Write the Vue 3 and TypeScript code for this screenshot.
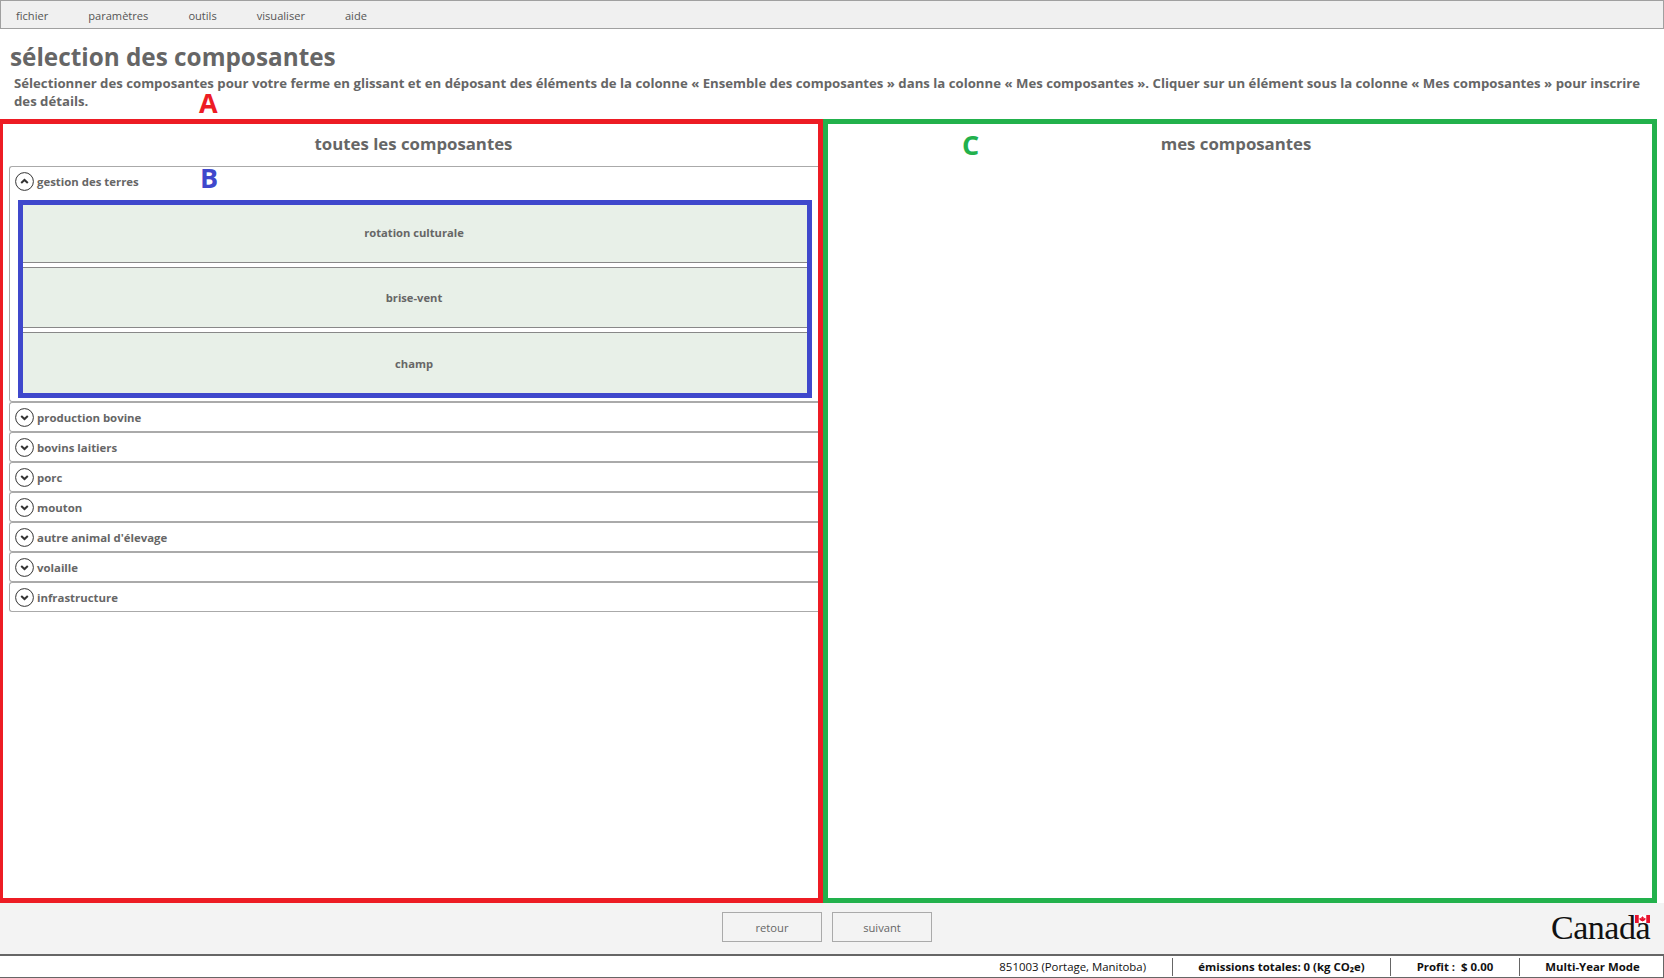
<script setup lang="ts">
const menus: string[] = ['fichier', 'paramètres', 'outils', 'visualiser', 'aide']
const available: string[] = ['rotation culturale', 'brise-vent', 'champ']
const groups: string[] = [
  'production bovine',
  'bovins laitiers',
  'porc',
  'mouton',
  "autre animal d'élevage",
  'volaille',
  'infrastructure',
]
</script>

<template>
  <div class="page">
    <nav class="menu">
      <span v-for="m in menus" :key="m" class="menu-item">{{ m }}</span>
    </nav>

    <header class="head">
      <h1>sélection des composantes</h1>
      <p>
        Sélectionner des composantes pour votre ferme en glissant et en déposant des éléments de la
        colonne « Ensemble des composantes » dans la colonne « Mes composantes ». Cliquer sur un
        élément sous la colonne « Mes composantes » pour inscrire des détails.
      </p>
      <span class="mark mark-a">A</span>
    </header>

    <main class="columns">
      <section class="col col-all">
        <h2>toutes les composantes</h2>
        <div class="expander open">
          <div class="exp-head">
            <svg class="chev" viewBox="0 0 19 19">
              <circle cx="9.500" cy="9.500" r="8.900" fill="none" stroke="#333" stroke-width="1" />
              <path d="M6.200 11 9.500 7.900l3.300 3.100" fill="none" stroke="#333" stroke-width="2" />
            </svg>
            <span>gestion des terres</span>
            <span class="mark mark-b">B</span>
          </div>
          <div class="items">
            <div v-for="a in available" :key="a" class="item">{{ a }}</div>
          </div>
        </div>
        <div v-for="g in groups" :key="g" class="expander">
          <div class="exp-head">
            <svg class="chev" viewBox="0 0 19 19">
              <circle cx="9.500" cy="9.500" r="8.900" fill="none" stroke="#333" stroke-width="1" />
              <path d="M6.200 8 9.500 11.100l3.300-3.100" fill="none" stroke="#333" stroke-width="2" />
            </svg>
            <span>{{ g }}</span>
          </div>
        </div>
      </section>
      <section class="col col-mine">
        <h2>mes composantes</h2>
        <span class="mark mark-c">C</span>
      </section>
    </main>

    <footer class="nav-bar">
      <div class="buttons">
        <button type="button">retour</button>
        <button type="button">suivant</button>
      </div>
      <div class="wordmark">
        Canada
        <svg class="flag" viewBox="0 0 30 16">
          <rect width="30" height="16" fill="#fff" />
          <rect width="7.500" height="16" fill="#e8112d" />
          <rect x="22.500" width="7.500" height="16" fill="#e8112d" />
          <path
            d="M15 2l-1.400 2.600-1.300-.7.600 3.400-1.900-2-.4 1-2-.3.700 2-.9.500 3.200 2.600-.4 1.100 3.400-.4V14h.8v-2.200l3.400.4-.4-1.100 3.200-2.600-.9-.5.700-2-2 .3-.4-1-1.900 2 .6-3.400-1.300.7z"
            fill="#e8112d"
          />
        </svg>
      </div>
    </footer>

    <div class="status">
      <span class="cell plain">851003 (Portage, Manitoba)</span>
      <span class="cell em">émissions totales: 0 (kg CO₂e)</span>
      <span class="cell profit">Profit :&nbsp; $ 0.00</span>
      <span class="cell mode">Multi-Year Mode</span>
    </div>
  </div>
</template>

<style scoped>
.page {
  position: relative;
  display: flex;
  flex-direction: column;
  height: 978px;
  background: #fff;
  color: #666;
  font-family: 'Open Sans', 'Noto Sans', sans-serif;
  overflow: hidden;
}

.menu {
  display: flex;
  align-items: center;
  gap: 40px;
  height: 29px;
  box-sizing: border-box;
  padding: 1px 15px 0;
  background: #f0f0f0;
  border: 1px solid #a0a0a0;
  font-size: 11.100px;
  color: #555;
}

.head {
  position: relative;
  height: 90px;
  box-sizing: border-box;
  padding: 12px 10px 0;
}

h1 {
  margin: 0;
  font-size: 24.300px;
  line-height: 32px;
  font-weight: 700;
  color: #666;
}

.head p {
  margin: 1px 4px 0;
  max-width: 1632px;
  font-size: 13.200px;
  line-height: 18px;
  font-weight: 700;
  color: #666;
}

.columns {
  display: flex;
  height: 784px;
  padding-right: 7px;
}

.col {
  position: relative;
  box-sizing: border-box;
  height: 100%;
  border-style: solid;
  border-width: 5px;
}

.col-all {
  width: 823px;
  border-color: #ed1c24;
  border-left-width: 3px;
  padding-left: 6px;
}

.col-mine {
  flex: 1;
  border-color: #22b14c;
  padding-right: 8px;
}

h2 {
  margin: 0;
  height: 42px;
  line-height: 40px;
  text-align: center;
  font-size: 16.800px;
  font-weight: 700;
  color: #666;
}

.expander {
  box-sizing: border-box;
  height: 30px;
  border: 1px solid #aaa;
  border-right: none;
  border-radius: 3px 0 0 3px;
  padding-left: 5px;
}

.expander.open {
  height: 236px;
}

.exp-head {
  position: relative;
  display: flex;
  align-items: center;
  gap: 3px;
  height: 28px;
  font-size: 11.400px;
  font-weight: 700;
}

.chev {
  width: 19px;
  height: 19px;
  flex: none;
}

.items {
  box-sizing: border-box;
  height: 198px;
  margin: 5px 6px 0 3px;
  border: 5px solid #3f48cc;
  display: flex;
  flex-direction: column;
  gap: 4px;
  background: #fff;
}

.item {
  flex: 1;
  display: flex;
  align-items: center;
  justify-content: center;
  background: #e8f0e8;
  border-top: 1px solid #888;
  border-bottom: 1px solid #888;
  padding-right: 2px;
  font-size: 11.200px;
  font-weight: 700;
}

.item:first-child {
  flex: none;
  box-sizing: border-box;
  height: 58px;
  padding-bottom: 3px;
  border-top: none;
}

.item:last-child {
  border-bottom: none;
  padding-top: 2px;
}

.mark {
  position: absolute;
  font-size: 27px;
  font-weight: 700;
  line-height: 1;
}

.mark-a {
  left: 199px;
  top: 60px;
  color: #ed1c24;
}

.mark-b {
  left: 185px;
  top: -3px;
  color: #3f48cc;
}

.mark-c {
  left: 134px;
  top: 7px;
  color: #22b14c;
}

.nav-bar {
  position: relative;
  flex: 1;
  background: #f3f3f3;
  display: flex;
  justify-content: center;
  padding: 9px 10px 0 0;
}

.buttons {
  display: flex;
  gap: 10px;
  height: 30px;
}

button {
  width: 100px;
  height: 30px;
  background: #f3f3f3;
  border: 1px solid #aaa;
  font-family: inherit;
  font-size: 11.200px;
  color: #666;
  padding: 0;
}

.wordmark {
  position: absolute;
  right: 14px;
  top: 6px;
  font-family: 'Liberation Serif', serif;
  font-size: 34px;
  line-height: 38px;
  letter-spacing: -0.5px;
  color: #111;
}

.flag {
  position: absolute;
  right: 0;
  top: 6px;
  width: 15px;
  height: 8px;
}

.status {
  display: flex;
  justify-content: flex-end;
  align-items: center;
  height: 24px;
  box-sizing: border-box;
  background: #fff;
  border-top: 2px solid #666;
  border-bottom: 1px solid #666;
  border-right: 1px solid #666;
  font-size: 11.400px;
  color: #111;
}

.cell {
  display: flex;
  align-items: center;
  justify-content: center;
  height: 18px;
  font-weight: 700;
  border-left: 1px solid #666;
}

.cell.plain {
  border-left: none;
  font-weight: 400;
  padding-right: 26px;
}

.em {
  width: 217px;
}

.profit {
  width: 128px;
}

.mode {
  width: 144px;
  box-sizing: border-box;
  padding-left: 2px;
}
</style>
